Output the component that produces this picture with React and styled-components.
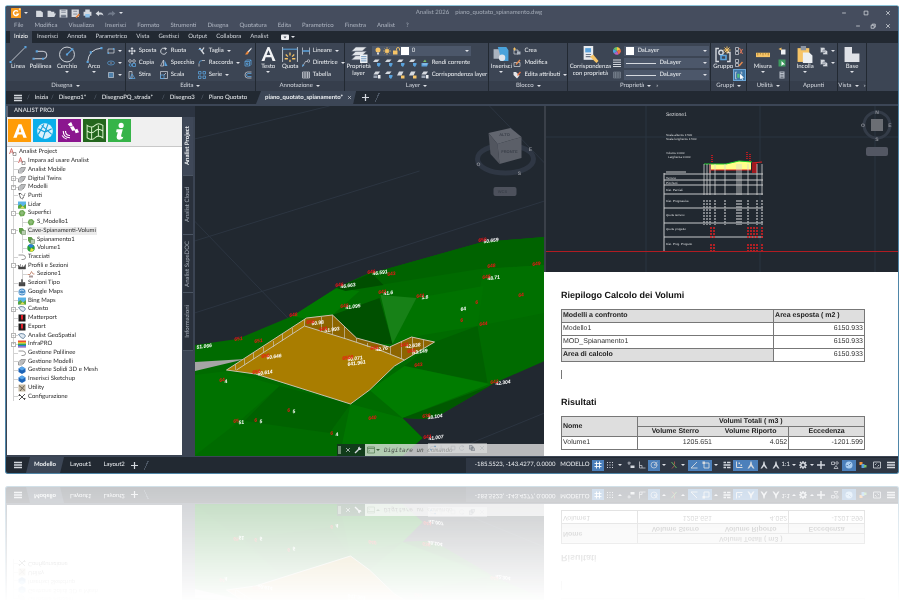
import { useState } from 'react';
import styled, { createGlobalStyle, css } from 'styled-components';

const W = '#d5d9df';
const B = '#5aa2dc';
const Y = '#f6c467';
const line = { fill: 'none', stroke: W, strokeWidth: 1.4 };
const blue = { fill: 'none', stroke: B, strokeWidth: 1.6 };

// all glyphs are drawn on a 16 x 16 grid
const glyphs = {
  logo: (
    <>
      <rect width="16" height="16" rx="1" fill="#f59a1f" />
      <path d="M11 5.5a4 4 0 1 0 .6 4.5H8.5" fill="none" stroke="#fff" strokeWidth="2.2" />
      <circle cx="14" cy="2" r="1.5" fill="#ffe2b0" />
    </>
  ),
  file: <path d="M2 3h8l4 3v8H2z" fill={W} />,
  open: <path d="M1 3h5l2 2h5v3h3l-3 6H1z" fill={W} />,
  save: (
    <>
      <path d="M1 1h14v14H1z" fill={W} />
      <path d="M4 3h8M4 6h8M4 11h8v4H4z" stroke="#6b7484" fill="#6b7484" strokeWidth="1.2" />
    </>
  ),
  saveas: (
    <>
      <path d="M1 1h13v13H1z" fill={W} />
      <path d="M4 4h7M4 9h7" stroke="#6b7484" strokeWidth="1.4" />
      <path d="M8 14l6-6 2 2-6 6z" fill="#e8833a" />
    </>
  ),
  print: (
    <>
      <path d="M4 1h8v4H4zM1 5h14v7H1z" fill={W} />
      <path d="M4 9h8v6H4z" fill="#8ec1ea" />
    </>
  ),
  undo: <path d="M1 8l6-5v3h4q4 1 4 6q-2-3-8-2v3z" fill={W} />,
  redo: <path d="M15 8l-6-5v3H5q-4 1-4 6q2-3 8-2v3z" fill="#707989" />,
  min: <path d="M3 8h10" {...line} strokeWidth="2" />,
  max: <path d="M3 3h10v10H3z" {...line} strokeWidth="2" />,
  restore: <path d="M3 6h8v8H3zM6 6V3h8v8h-3" {...line} strokeWidth="2" />,
  close: <path d="M3 3l10 10M13 3L3 13" {...line} strokeWidth="2" />,
  menu: <path d="M0 3h16M0 8h16M0 13h16" {...line} strokeWidth="2.6" />,
  plus: <path d="M8 0v16M0 8h16" {...line} strokeWidth="2.8" />,
  camera: (
    <>
      <rect y="3" width="16" height="11" rx="2" fill="#eef0f3" />
      <path d="M5 7h6l-3 4z" fill="#49505c" />
    </>
  ),
  line: (
    <>
      <path d="M2 14L14 2" {...line} strokeWidth="0.8" />
      <path d="M0 14h2v2H0zM14 0h2v2h-2z" fill={B} />
    </>
  ),
  polyline: (
    <>
      <path d="M1 12h9a3.5 3.5 0 0 0 0-7H4" {...line} strokeWidth="0.9" />
      <path d="M0 11h2v2H0zM9 11h2v2H9zM3 4h2v2H3z" fill={B} />
    </>
  ),
  circle: (
    <>
      <circle cx="8" cy="8" r="7" {...line} strokeWidth="0.9" />
      <path d="M8 8l5-5" {...blue} strokeWidth="1" />
      <path d="M7 7h2v2H7zM12 2h2v2h-2z" fill={B} />
    </>
  ),
  arc: (
    <>
      <path d="M2 15Q3 3 15 2" {...line} strokeWidth="0.9" />
      <path d="M1 14h2v2H1zM4 5h2v2H4zM14 1h2v2h-2z" fill={B} />
    </>
  ),
  rect: (
    <>
      <path d="M2 4h12v8H2z" {...line} />
      <path d="M1 11h3v3H1zM12 2h3v3h-3z" fill={B} />
    </>
  ),
  ellipse: (
    <>
      <ellipse cx="8" cy="8" rx="7" ry="4" {...line} stroke={B} />
      <path d="M7 7h2v2H7z" fill={W} />
    </>
  ),
  hatch: (
    <>
      <path d="M3 3h10v10H3z" {...line} />
      <path d="M3 6h10M3 10h10M6 3v10M10 3v10" {...blue} />
    </>
  ),
  move: <path d="M8 0l3 4H9v3h3V5l4 3-4 3V9H9v3h2l-3 4-3-4h2V9H4v2L0 8l4-3v2h3V4H5z" fill={W} />,
  copy: (
    <>
      <circle cx="4" cy="4" r="2.7" {...line} />
      <circle cx="12" cy="4" r="2.7" {...line} />
      <circle cx="5" cy="12" r="2.7" {...blue} />
      <path d="M9 9h6v6H9z" {...blue} />
    </>
  ),
  stretch: (
    <>
      <path d="M2 1h6v14H2z" {...line} />
      <path d="M8 6l6 9H4z" {...blue} />
    </>
  ),
  rotate: (
    <>
      <path d="M13 10a6 6 0 1 1-3-7" {...line} strokeWidth="1.8" />
      <path d="M9 0l5 3-4 4z" fill={W} />
    </>
  ),
  mirror: (
    <>
      <path d="M7 2v12H1z" {...line} />
      <path d="M9 2v12h6z" fill={B} />
    </>
  ),
  scale: (
    <>
      <path d="M1 1h14v14H1z" {...line} />
      <path d="M1 8h7v7H1z" {...blue} />
      <path d="M8 8l4-4" {...line} />
    </>
  ),
  trim: (
    <>
      <path d="M3 2l9 12M12 1L7 9" {...line} strokeWidth="2.6" />
      <path d="M1 5h6" {...blue} />
    </>
  ),
  fillet: (
    <>
      <path d="M2 15V9" {...line} />
      <path d="M2 9q0-6 6-6" {...blue} />
      <path d="M8 3h6" {...line} />
    </>
  ),
  array: (
    <>
      <path d="M1 1h5v5H1zM10 1h5v5h-5z" {...blue} />
      <path d="M1 10h5v5H1zM10 10h5v5h-5z" {...blue} />
    </>
  ),
  brush: (
    <>
      <path d="M15 1L7 9l2 2 6-7z" fill="#e7e9ed" />
      <path d="M7 8l3 3-3 4H2z" fill="#f08a3c" />
    </>
  ),
  cube: <path d="M2 5h9v9H2zM2 5l3-3h9v9l-3 3M11 5l3-3M5 8h3v3H5z" {...blue} />,
  offset: (
    <>
      <path d="M15 2H7q-5 0-5 6t5 6h8" {...line} />
      <path d="M15 5H8q-3 0-3 3t3 3h7" {...blue} />
    </>
  ),
  textA: <path d="M7 0h2l6.500 15h-3.200l-1.300-4H5L3.700 15H.5zM6 8.500h4L8 3.500z" fill="#f1f3f5" />,
  dim: (
    <>
      <path d="M1 1v14M15 1v14" {...line} strokeWidth="0.8" />
      <path d="M1 3h14" {...blue} strokeWidth="1" />
      <path d="M8 6v3M4 8l2 2M12 8l-2 2M3 12h3M10 12h3M8 13v2" stroke={Y} strokeWidth="1.200" />
    </>
  ),
  linear: (
    <>
      <path d="M1 1v14M15 1v14" {...line} />
      <path d="M1 8h14" {...blue} strokeWidth="3" />
    </>
  ),
  leader: (
    <>
      <path d="M1 15L7 5h3" {...line} />
      <circle cx="13" cy="4" r="2.500" {...line} />
      <path d="M0 11l5 1-4 4z" fill={B} />
    </>
  ),
  table: <path d="M1 2h14v12H1zM1 6h14M1 10h14M6 2v12M11 2v12" {...line} />,
  layers: (
    <>
      <path d="M5 1h10l-4 4H1zM5 5h10l-4 4H1zM5 9h10l-4 4H1z" fill="#e3e6ea" stroke="#596273" strokeWidth="0.500" />
      <path d="M9 8h7v8H9z" fill="#eef2f6" />
      <path d="M10 10h5M10 12h5M10 14h5" stroke="#4b7fb0" strokeWidth="0.700" />
    </>
  ),
  bulb: (
    <>
      <circle cx="8" cy="6" r="5" fill={Y} />
      <path d="M6 11h4v4H6z" fill={W} />
    </>
  ),
  sun: (
    <>
      <circle cx="8" cy="8" r="4" fill={Y} />
      <path d="M8 0v16M0 8h16M3 3l10 10M13 3L3 13" stroke={Y} strokeWidth="1.200" />
    </>
  ),
  lock: (
    <>
      <path d="M2 7h9v8H2z" fill={Y} />
      <path d="M9 7V4q0-3 3-3t3 3v3" fill="none" stroke={Y} strokeWidth="1.800" />
    </>
  ),
  swatch: <path d="M0 0h16v16H0z" fill="#fff" />,
  layerBlue: (
    <>
      <path d="M4 1h9l-4 5H0z" fill={W} />
      <path d="M8 8h7v3l-3 5-4-3z" fill={B} />
    </>
  ),
  layerYellow: (
    <>
      <path d="M4 1h9l-4 8H0z" fill={W} />
      <path d="M8 9h7v6H8z" fill={Y} />
    </>
  ),
  layerWhite: (
    <>
      <path d="M5 1h9l-4 6H1z" fill={W} />
      <path d="M1 9h8v5H1z" fill="#9ba4b2" />
      <path d="M10 8h5v7h-5z" fill="#eef0f3" />
    </>
  ),
  makeCurrent: (
    <>
      <path d="M1 8h14l-3 7H1z" fill={B} />
      <path d="M4 6l4-5 3 5z" fill="#7ac069" />
      <path d="M3 10h9" stroke="#fff" />
    </>
  ),
  insert: (
    <>
      <path d="M1 3h10v9H1z" fill="#aab3bf" />
      <path d="M5 1h8l2 3v10H7V8z" fill="#4aa3dc" />
      <circle cx="9" cy="11" r="3" fill="#dfe5ec" />
    </>
  ),
  create: (
    <>
      <path d="M2 6h8v8H2z" {...line} />
      <path d="M8 9h7v6H8z" fill="#aab3bf" />
      <path d="M3 1v6M0 4h6" stroke={Y} strokeWidth="2" />
    </>
  ),
  edit: (
    <>
      <path d="M2 7h12v8H2z" {...line} />
      <path d="M5 10l8-9 2 2-8 9z" fill="#e58a4e" />
    </>
  ),
  attr: (
    <>
      <path d="M1 2h5l7 7-5 6-7-7z" fill="#e3e6ea" />
      <path d="M8 8l6-7 2 2-6 7z" fill="#e8754a" />
    </>
  ),
  match: (
    <>
      <path d="M2 0h9v13H2z" fill="#e8ebef" />
      <path d="M3.500 2H9v4H3.500z" fill={B} />
      <path d="M4 8h5M4 10h5" stroke="#6b7484" />
      <path d="M8 10l3-2 5 6-2 2z" fill={Y} />
    </>
  ),
  wheel: (
    <>
      <path d="M8 8V0a8 8 0 0 1 7 5z" fill="#f5c542" />
      <path d="M8 8l7-3a8 8 0 0 1-4 10z" fill="#ef6a43" />
      <path d="M8 8l3 7a8 8 0 0 1-9-2z" fill="#b95fc0" />
      <path d="M8 8l-6 5A8 8 0 0 1 1 4z" fill="#4aa3dc" />
      <path d="M8 8L1 4a8 8 0 0 1 7-4z" fill="#6bc16b" />
    </>
  ),
  weights: <path d="M0 2h16M0 6.500h16M0 11h16M0 15h16" stroke={W} strokeWidth="2" />,
  ltype: <path d="M1 2h14v12H1zM1 6h14M1 10h14M5 2v12M10 2v12" fill="#4c5462" stroke="#8b94a2" />,
  group: (
    <>
      <path d="M4 2H1v13h3M12 6h3v9h-3" {...line} />
      <circle cx="6" cy="6" r="2.200" {...line} />
      <path d="M6 9h5v4H6z" {...blue} />
      <path d="M12 0v7M8.500 3.500h7M9.500 1l5 5M14.500 1l-5 5" stroke={Y} strokeWidth="1" />
    </>
  ),
  ungroup: (
    <>
      <path d="M1 1h6v6H1zM1 9h6v6H1z" {...line} />
      <path d="M9 2l6 12M15 4l-5 9" stroke="#e07a5c" strokeWidth="2" />
    </>
  ),
  groupEdit: (
    <>
      <path d="M1 1h6v6H1zM1 9h6v6H1z" {...line} />
      <path d="M8 14l7-8" stroke="#e58a4e" strokeWidth="3" />
    </>
  ),
  groupPick: (
    <>
      <path d="M3 2H1v12h2M10 2h2v4" {...line} />
      <path d="M4 5h4v7H4z" fill="#52c27c" />
      <path d="M9 5v10l2-2 2 3 1-1-1-3h3z" fill="#fff" />
    </>
  ),
  measure: (
    <>
      <path d="M0 6h16v5H0z" fill={Y} />
      <path d="M2 6v3M5 6v2M8 6v3M11 6v2M14 6v3" stroke="#9a7025" strokeWidth="0.800" />
    </>
  ),
  pick: (
    <>
      <path d="M6 5h9v10H6z" fill="#eef0f3" />
      <path d="M1 4l6-3v6z" fill={Y} />
    </>
  ),
  selectAll: (
    <>
      <path d="M1 1h14v14H1z" fill="#3d9b5f" />
      <path d="M7 4v10l3-3h4z" fill="#fff" />
    </>
  ),
  calc: (
    <>
      <path d="M3 1h10v14H3z" fill="#b9c0ca" />
      <path d="M5 3h6M5 7h6M5 10h6M5 13h6" stroke="#4b5361" strokeWidth="1.300" />
    </>
  ),
  paste: (
    <>
      <path d="M1 2h11v13H1z" fill={Y} />
      <path d="M4 0h5v4H4z" fill="#8c95a3" />
      <path d="M6 6h6l3 3v7H6z" fill="#eceff2" />
    </>
  ),
  copyClip: <path d="M1 1h7l2 2v8H1zM6 6h6l3 3v6H6z" fill={W} stroke="#515a69" />,
  base: <path d="M1 1h7v6h7v8H1z" fill="#dfe2e7" />,
  grid: <path d="M5 1v14M11 1v14M1 5h14M1 11h14" {...line} stroke="#fff" strokeWidth="1.800" />,
  dots: <path d="M2 3h12M2 8h12M2 13h12" {...line} strokeWidth="2" strokeDasharray="2 3" />,
  dyn: (
    <>
      <path d="M4 1v7M1 4h7" {...line} />
      <path d="M7 9h8v5H7z" fill={W} />
    </>
  ),
  ortho: <path d="M3 1v13h12M3 9h5v5" {...line} />,
  polar: (
    <>
      <circle cx="8" cy="8" r="6" {...line} />
      <path d="M8 8l7-6M8 8h7" {...line} />
    </>
  ),
  iso: (
    <>
      <path d="M3 2l10 12" stroke="#6cbf5c" strokeWidth="1.800" />
      <path d="M9 1v6M9 9l-5 6" stroke="#cf6152" strokeWidth="1.400" />
    </>
  ),
  track: <path d="M14 2L2 14h13" {...line} strokeWidth="1.800" />,
  osnap: (
    <>
      <path d="M4 4h10v10H4z" {...line} strokeWidth="1.800" />
      <path d="M1 1h5v5H1z" fill={W} />
    </>
  ),
  lwt: <path d="M1 3h5M8 3h7M1 8h14M1 13h5M8 13h7" {...line} strokeWidth="2.600" />,
  ucs: (
    <>
      <path d="M3 1v12h12" {...line} strokeWidth="2" />
      <path d="M7 3h3v3H7zM11 7h3v3h-3z" fill={W} />
    </>
  ),
  person: <path d="M7 1h2l1 6 5 8h-3L8 10l-4 5H1l5-8z" fill={W} />,
  gear: (
    <>
      <circle cx="8" cy="8" r="4.500" fill="none" stroke={W} strokeWidth="3" />
      <path d="M8 0v3M8 13v3M0 8h3M13 8h3M2 2l2 2M12 12l2 2M14 2l-2 2M4 12l-2 2" {...line} strokeWidth="2.500" />
    </>
  ),
  shapes: (
    <>
      <path d="M1 2h6v5H1zM6 15l4-6 4 6z" {...line} />
      <circle cx="12" cy="4" r="2.500" {...line} />
    </>
  ),
  perf: (
    <>
      <circle cx="8" cy="8" r="7" fill="#a9cdf0" />
      <path d="M8 8l4-4M3 9h3" stroke="#3f6ea8" strokeWidth="1.500" />
    </>
  ),
  cloud: (
    <>
      <path d="M1 2h6v6H1z" fill="#f0913c" />
      <path d="M5 6h6v8H5z" fill={B} />
      <path d="M10 8h5v5h-5z" fill="#7ac069" />
    </>
  ),
  full: <path d="M1 2h14v12H1zM4 8l3-3M12 8l-3 3" {...line} strokeWidth="1.600" />,
  wrench: <path d="M1 13l7-7q-1-4 3-5l1 3 3 1q-1 4-5 3l-7 7z" fill={W} />,
  command: <path d="M1 2h14v12H1zM1 5h14M3 8l2 1.500L3 11" fill="none" stroke="#51784f" strokeWidth="1.400" />,
  // project tree
  letterA: (
    <>
      <path d="M1 12L5 1l4 11M3 8h4" fill="none" stroke="#c6504c" strokeWidth="1.600" />
      <path d="M8 9h6v6H8z" fill="none" stroke="#666" strokeWidth="1.200" />
    </>
  ),
  sheet: <path d="M1 8l5-5h9l-3 7-5 4H1zM4 6h9M3 10h9" fill="#dfe1e4" stroke="#666" strokeWidth="1.200" />,
  points: <path d="M2 3h3M2 3l3 9 4 2 5-11M5 3l4 3" fill="none" stroke="#333" strokeWidth="1.800" strokeDasharray="3 1" />,
  photo: (
    <>
      <path d="M0 1h16v14H0z" fill="#5ab4e6" />
      <path d="M0 10l5-4 5 5 6-5v9H0z" fill="#5aa83c" />
      <path d="M4 15l5-5 5 5z" fill="#e8df5a" />
    </>
  ),
  surface: (
    <>
      <path d="M1 9l3-6 6-1 5 5-3 7-7 1z" fill="#6aa84f" />
      <path d="M4 8h8M8 4v9" stroke="#a8c79a" strokeWidth="1.500" />
    </>
  ),
  cave: (
    <>
      <path d="M2 2h7l3 4v8H5L2 9z" fill="#5f9e48" />
      <path d="M7 7h8v8H7z" fill="#b8cdb0" stroke="#537c47" />
    </>
  ),
  volume: (
    <>
      <circle cx="8" cy="8" r="7.500" fill="#2aa038" />
      <path d="M8 8L2 3a7.500 7.500 0 0 1 12 1z" fill="#2b7fd8" />
      <path d="M8 8l-2 7h5l3-4z" fill="#f1e13b" />
    </>
  ),
  path: <path d="M1 4h9q5 1 5 5t-5 4H7" fill="none" stroke="#777" strokeWidth="1.500" />,
  profile: <path d="M1 14V6l3 4h8l3-5v9zM5 4v5M9 6v4" fill="#444" stroke="#444" />,
  section: (
    <>
      <path d="M1 9h5l3-6 3 5h3" fill="none" stroke="#b8745a" strokeWidth="1.500" />
      <path d="M4 11h8v4H4z" fill="#a99" />
    </>
  ),
  types: <path d="M7 1h2v6h5v7H2V7h5zM4 9v3M8 9v3M12 9v3" fill="#555" stroke="#222" strokeWidth="0.800" />,
  globe: (
    <>
      <circle cx="8" cy="8" r="7" fill="#4a8fc9" />
      <path d="M3 6q5-4 9 0M2 10q6 4 12 0" stroke="#cfe4f5" strokeWidth="1.800" fill="none" />
    </>
  ),
  land: <path d="M1 5l5-2 6 1 3 4-4 5-4-1z" fill="#dfe9f2" stroke="#4c6e8e" strokeWidth="1.500" />,
  matter: (
    <>
      <path d="M1 1h14v14H1z" fill="#1b1b1b" />
      <path d="M6 2h4v7l-2 5-2-5z" fill="#e3202b" />
    </>
  ),
  rainbow: (
    <>
      <path d="M0 1h16v3H0z" fill="#e94b35" />
      <path d="M0 4h16v3H0z" fill="#f4b41e" />
      <path d="M0 7h16v3H0z" fill="#35ab4a" />
      <path d="M0 10h16v3H0z" fill="#2a79d0" />
      <path d="M0 13h16v2H0z" fill="#7a3fb0" />
    </>
  ),
  solid: (
    <>
      <path d="M8 1l7 4v7l-7 4-7-4V5z" fill="#1c63b7" />
      <path d="M8 1l7 4-7 4-7-4z" fill="#57a5ea" />
    </>
  ),
  tools: <path d="M2 2l12 12M14 2L2 14M1 5h5M10 11h5" fill="none" stroke="#555" strokeWidth="2" />,
  utility: (
    <>
      <path d="M1 1h14v14H1z" fill="#c8bba3" />
      <path d="M2 3l12 10M13 3L4 14" stroke="#6a6257" strokeWidth="2" />
    </>
  ),
  // coloured palette buttons
  bigA: <path d="M6.700 2h2.600l4.700 12h-3l-1-2.800H6L5 14H2zM6.800 9h2.400L8 5z" fill="#fff" />,
  net: (
    <>
      <circle cx="8" cy="8" r="7" fill="#d9f1fb" />
      <path d="M2 6l6 3 6-3M8 9l-2 6M8 9l3-8M2 11l5-9M14 11L5 3" fill="none" stroke="#12a0dc" strokeWidth="1" />
    </>
  ),
  satellite: (
    <>
      <path d="M6 2l3-2 1.500 3-2.500 1zM12 7l2.500-1 1.500 3-3 1z" fill="#fff" />
      <path d="M8 4.500l3-1 2 3.500-3 1z" fill="#fff" />
      <path d="M4 8q0 4 4 4M2 8q0 6 6 6M1 12q2 3 4 3" fill="none" stroke="#fff" strokeWidth="1" />
    </>
  ),
  mesh: <path d="M1 3q4 3 7 0t7 0v11q-4-3-7 0t-7 0zM5 4v11M11 3v10M1 8q4 3 7 0t7 0" fill="none" stroke="#d5f0c8" strokeWidth="0.900" />,
  info: (
    <>
      <circle cx="9" cy="3" r="2.300" fill="#fff" />
      <path d="M5 6.500h5.500L9 12q0 2 2 1l-1 2q-5 2-5-2l1-4H4.500z" fill="#fff" />
    </>
  ),
};

const Icon = ({ name, size = 8 }) => (
  <Svg viewBox="0 0 16 16" width={size} height={size} aria-hidden="true">
    {glyphs[name]}
  </Svg>
);

const menus = ['File', 'Modifica', 'Visualizza', 'Inserisci', 'Formato', 'Strumenti', 'Disegna', 'Quotatura', 'Edita', 'Parametrico', 'Finestra', 'Analist', '?'];
const ribbonTabs = ['Inizio', 'Inserisci', 'Annota', 'Parametrico', 'Vista', 'Gestisci', 'Output', 'Collabora', 'Analist'];
const quick = ['file', 'open', 'save', 'saveas', 'print', 'undo', 'redo'];

const drawings = [
  { label: 'Inizia', width: 24 },
  { label: 'Disegno1*', width: 43 },
  { label: 'DisegnoPQ_strada*', width: 68 },
  { label: 'Disegno3', width: 39 },
  { label: 'Piano Quotato', width: 51 },
];

const tree = [
  [0, 'letterA', 'Analist Project'],
  [1, 'letterA', 'Impara ad usare Analist'],
  [1, 'sheet', 'Analist Mobile'],
  [1, 'sheet', 'Digital Twins', '+'],
  [1, 'sheet', 'Modelli', '+'],
  [1, 'points', 'Punti'],
  [1, 'photo', 'Lidar'],
  [1, 'surface', 'Superfici', '-'],
  [2, 'surface', 'S_Modello1'],
  [1, 'cave', 'Cave-Spianamenti-Volumi', '-'],
  [2, 'cave', 'Spianamento1'],
  [2, 'volume', 'Volume1'],
  [1, 'path', 'Tracciati'],
  [1, 'profile', 'Profili e Sezioni', '-'],
  [2, 'section', 'Sezione1'],
  [1, 'types', 'Sezioni Tipo'],
  [1, 'globe', 'Google Maps'],
  [1, 'photo', 'Bing Maps'],
  [1, 'land', 'Catasto', '+'],
  [1, 'matter', 'Matterport'],
  [1, 'matter', 'Export'],
  [1, 'land', 'Analist GeoSpatial', '+'],
  [1, 'rainbow', 'InfraPRO', '+'],
  [1, 'path', 'Gestione Polilinee'],
  [1, 'sheet', 'Gestione Modelli'],
  [1, 'solid', 'Gestione Solidi 3D e Mesh'],
  [1, 'solid', 'Inserisci Sketchup'],
  [1, 'utility', 'Utility'],
  [1, 'tools', 'Configurazione'],
];

const paletteButtons = [
  ['bigA', '#ff9c07', 'Analist'],
  ['net', '#0aaeea', 'Rete'],
  ['satellite', '#8b168f', 'Satellite'],
  ['mesh', '#23661d', 'Superfici'],
  ['info', '#36b449', 'Informazioni'],
];

const sideTabs = [
  ['Analist Project', 59],
  ['Analist Cloud', 59],
  ['Analist SupeDOC', 58],
  ['Informazioni', 58],
];

// name, width, active, caret after it
const statusTools = [
  ['grid', 12, true],
  ['dots', 12, false, true],
  ['dyn', 12],
  ['ortho', 11],
  ['polar', 12, true, true],
  ['iso', 10, false, true],
  ['track', 12, true],
  ['osnap', 12, true, true],
  ['lwt', 12],
  ['ucs', 12, true],
  ['person', 13, true],
  ['person', 12],
  ['person', 12],
];

// x, y, red tag, white elevation
const spots = [
  [197, 346, '', '51.066'],
  [235, 340, '651', ''],
  [255, 342, '651', ''],
  [290, 316, '648', ''],
  [336, 286, '646', '46.663'],
  [341, 307, '640', '41.095'],
  [368, 273, '646', '46.591'],
  [388, 275, '643', ''],
  [379, 293, '641', '41.6'],
  [417, 297, '641', '1.6'],
  [479, 241, '650', '50.659'],
  [488, 267, '648', ''],
  [483, 278, '648', '48.71'],
  [533, 265, '649', ''],
  [461, 308, '', '64'],
  [476, 303, '6', ''],
  [519, 296, '64', ''],
  [461, 321, '6', ''],
  [480, 325, '644', ''],
  [401, 346, '642', '42.638'],
  [408, 352, '643', '43.149'],
  [415, 366, '643', ''],
  [491, 383, '642', '42.304'],
  [423, 417, '638', '38.104'],
  [424, 438, '641', '41.007'],
  [369, 419, '640', ''],
  [307, 323, '650', '50.98'],
  [320, 330, '641', '41.993'],
  [262, 357, '650', '50.646'],
  [253, 373, '650', '50.614'],
  [343, 359, '6500', '50.071'],
  [348, 363, '', '641.961'],
  [371, 349, '642', '42.76'],
  [220, 381, '64', '4'],
  [234, 422, '65', '51'],
  [255, 421, '6', '5'],
  [288, 411, '6', '5'],
  [331, 434, '6', '4'],
];

const Big = ({ icon, size = 18, width, caret = true, children }) => (
  <BigButton type="button" $width={width}>
    <Icon name={icon} size={size} />
    <span>{children}</span>
    {caret && <Caret />}
  </BigButton>
);

const Tool = ({ icon, caret, pressed, children }) => (
  <ToolButton type="button" aria-label={children ? undefined : icon} $pressed={pressed}>
    <Icon name={icon} size={pressed ? 9 : 8} />
    {children && <span>{children}</span>}
    {caret && <Caret />}
  </ToolButton>
);

const Panel = ({ title, size, arrow = true, launcher, children }) => (
  <PanelBox $size={size}>
    <PanelBody>{children}</PanelBody>
    <PanelTitle>
      <span>{title}</span>
      {arrow && <Caret />}
      {launcher && <Launcher>»</Launcher>}
    </PanelTitle>
  </PanelBox>
);

function Ribbon() {
  return (
    <RibbonRow>
      <Panel title="Disegna" size={119}>
        <Big icon="line" width={22} caret={false}>Linea</Big>
        <Big icon="polyline" width={23} caret={false}>Polilinea</Big>
        <Big icon="circle" width={30}>Cerchio</Big>
        <Big icon="arc" width={24}>Arco</Big>
        <ToolColumn>
          <Tool icon="rect" caret />
          <Tool icon="ellipse" caret />
          <Tool icon="hatch" caret />
        </ToolColumn>
      </Panel>
      <Panel title="Edita" size={129}>
        <ToolColumn $width={32}>
          <Tool icon="move">Sposta</Tool>
          <Tool icon="copy">Copia</Tool>
          <Tool icon="stretch">Stira</Tool>
        </ToolColumn>
        <ToolColumn $width={38}>
          <Tool icon="rotate">Ruota</Tool>
          <Tool icon="mirror">Specchio</Tool>
          <Tool icon="scale">Scala</Tool>
        </ToolColumn>
        <ToolColumn $width={46}>
          <Tool icon="trim" caret>Taglia</Tool>
          <Tool icon="fillet" caret>Raccorda</Tool>
          <Tool icon="array" caret>Serie</Tool>
        </ToolColumn>
        <ToolColumn>
          <Tool icon="brush" />
          <Tool icon="cube" />
          <Tool icon="offset" />
        </ToolColumn>
      </Panel>
      <Panel title="Annotazione" size={88}>
        <Big icon="textA" size={15} width={23}>Testo</Big>
        <Big icon="dim" width={21} caret={false}>Quota</Big>
        <ToolColumn>
          <Tool icon="linear" caret>Lineare</Tool>
          <Tool icon="leader" caret>Direttrice</Tool>
          <Tool icon="table">Tabella</Tool>
        </ToolColumn>
      </Panel>
      <Panel title="Layer" size={144}>
        <Big icon="layers" width={26} caret={false}>Proprietà layer</Big>
        <LayerColumn>
          <Field $width={99}>
            <Icon name="bulb" />
            <Icon name="sun" />
            <Icon name="lock" />
            <Icon name="swatch" />
            <Select aria-label="Layer corrente" defaultValue="0">
              <option>0</option>
            </Select>
            <Caret />
          </Field>
          <LayerTools>
            {['layerBlue', 'layerBlue', 'layerBlue', 'layerBlue'].map((n, i) => (
              <Tool key={i} icon={n} />
            ))}
            <Tool icon="makeCurrent">Rendi corrente</Tool>
          </LayerTools>
          <LayerTools>
            {['layerWhite', 'layerBlue', 'layerYellow', 'layerYellow'].map((n, i) => (
              <Tool key={i} icon={n} />
            ))}
            <Tool icon="layerWhite">Corrispondenza layer</Tool>
          </LayerTools>
        </LayerColumn>
      </Panel>
      <Panel title="Blocco" size={78}>
        <Big icon="insert" width={22}>Inserisci</Big>
        <ToolColumn>
          <Tool icon="create">Crea</Tool>
          <Tool icon="edit">Modifica</Tool>
          <Tool icon="attr" caret>Edita attributi</Tool>
        </ToolColumn>
      </Panel>
      <Panel title="Proprietà" size={142} launcher>
        <Big icon="match" width={42} caret={false}>Corrispondenza con proprietà</Big>
        <FieldColumn>
          <FieldRow>
            <Icon name="wheel" />
            <Field>
              <Icon name="swatch" />
              <Select aria-label="Colore" defaultValue="DaLayer">
                <option>DaLayer</option>
              </Select>
              <Caret />
            </Field>
          </FieldRow>
          {['weights', 'ltype'].map((n) => (
            <FieldRow key={n}>
              <Icon name={n} />
              <Field>
                <Stroke />
                <Select aria-label={n === 'weights' ? 'Spessore linea' : 'Tipo di linea'} defaultValue="DaLayer">
                  <option>DaLayer</option>
                </Select>
                <Caret />
              </Field>
            </FieldRow>
          ))}
        </FieldColumn>
      </Panel>
      <Panel title="Gruppi" size={35}>
        <Big icon="group" size={16} width={22} caret={false}>Gruppo</Big>
        <ToolColumn>
          <Tool icon="ungroup" />
          <Tool icon="groupEdit" />
          <Tool icon="groupPick" pressed />
        </ToolColumn>
      </Panel>
      <Panel title="Utilità" size={42}>
        <Big icon="measure" size={14} width={29}>Misura</Big>
        <ToolColumn>
          <Tool icon="pick" />
          <Tool icon="selectAll" />
          <Tool icon="calc" />
        </ToolColumn>
      </Panel>
      <Panel title="Appunti" size={47} arrow={false}>
        <Big icon="paste" width={28}>Incolla</Big>
        <ToolColumn>
          <Tool icon="copyClip" caret />
          <Tool icon="copyClip" caret />
        </ToolColumn>
      </Panel>
      <Panel title="Vista" size={28} launcher>
        <Big icon="base" width={26}>Base</Big>
      </Panel>
      <PanelBox $size={31} />
    </RibbonRow>
  );
}

function Terrain() {
  return (
    <Canvas viewBox="195 105 350 350" preserveAspectRatio="xMidYMid slice">
      <path d="M195 220L320 350M195 312L545 200M195 240L420 170M195 138L330 105M440 455L545 412M490 105L545 162" stroke="#2c3541" strokeWidth="1" fill="none" />
      <path d="M195 344L238 338L293 315L337 287L370 272L387 268L483 241L545 236V360L495 382L442 413L427 418L403 417L423 437L403 455H195z" fill="#006b00" />
      <path d="M293 315L337 287L360 290L333 314L307 318z" fill="#007a00" />
      <path d="M337 287L370 272L387 268L483 241L545 236V264L480 268L380 284z" fill="#006300" />
      <path d="M337 287L346 290L384 284L372 272z" fill="#004e00" />
      <path d="M333 314L380 297L393 343L370 343L357 337z" fill="#005000" />
      <path d="M484 268L545 264V312L478 325L480 290z" fill="#007000" />
      <path d="M417 297L484 285L478 325L412 336L393 343z" fill="#007300" />
      <path d="M435 341L478 325L488 382L405 365z" fill="#006000" />
      <path d="M405 365L490 383L403 417L370 389z" fill="#007c00" />
      <path d="M403 417L490 385L442 413L427 418z" fill="#005800" />
      <path d="M195 374L228 370L280 385L240 420L195 455z" fill="#007200" />
      <path d="M280 385L351 403L330 432L245 420z" fill="#006200" />
      <path d="M351 403L403 417L423 437L403 455H340z" fill="#007600" />
      <path d="M381 294L417 297L393 343z" fill="#178117" />
      <path d="M195 361L246 358L195 370z" fill="#a5a5a5" />
      <path d="M227 369L307 317L333 314L357 337L380 346L390 346L412 336L435 341L405 359L395 365L370 389L351 403L256 373z" fill="#a97d00" />
      <path d="M305 325L307 317L333 314L357 337L390 346L412 336L435 341L405 359L380 348L347 338z" fill="#8d6500" />
      <g fill="none" stroke="#c9c1ae" strokeWidth="1">
        <path d="M227 369L307 317L333 314L357 337L390 346L412 336L435 341L405 359L395 365L370 389L351 403L256 373z" />
        <path d="M237 369L305 325L347 338L380 349L405 359" />
        <path d="M236 363V369M245 358V364M254 352V358M264 346V352M274 340V346M283 333V340M293 327V333M305 318V325M322 316V331M333 314V334M345 326V338M357 337V341M368 342V346M391 346V353M402 341V358M413 336V354M424 339V347" strokeWidth="0.700" />
      </g>
      {spots.map(([x, y, tag, z]) => (
        <g key={`${x}-${y}`} transform={`rotate(-8 ${x} ${y})`}>
          <Spot x={x + (tag ? 5 : 0)} y={y + 2}>{z}</Spot>
          <Spot x={x} y={y} $tag>{tag}</Spot>
        </g>
      ))}
      <ellipse cx="506" cy="158" rx="28" ry="14" fill="none" stroke="#2f3744" strokeWidth="5" />
      <path d="M489 132L511 127L522 136L498 143z" fill="#62666f" />
      <path d="M489 132L498 143L500 163L491 153z" fill="#52565f" />
      <path d="M498 143L522 136V157L500 163z" fill="#5b5f68" />
      <rect x="494" y="186" width="23" height="9" rx="2" fill="#4d515c" />
      <Compass x="479" y="165">O</Compass>
      <Compass x="520" y="174">S</Compass>
      <Compass x="531" y="150">E</Compass>
      <Compass x="505" y="135" $dim>ALTO</Compass>
      <Compass x="510" y="152" $dim>FRONTE</Compass>
      <Compass x="503" y="192" $dim>WCS</Compass>
    </Canvas>
  );
}

const stations = [705, 708, 711, 716, 726, 738, 740, 742, 749, 758, 763];

function Section() {
  return (
    <Canvas viewBox="547 105 352 166" preserveAspectRatio="xMidYMid slice">
      <path d="M647 105V271M761 105V271M876 105V271M547 136H899" stroke="#2a3440" />
      <Note x="667" y="115" $size={5}>Sezione1</Note>
      <Note x="667" y="135">Scala altezze 1:500</Note>
      <Note x="667" y="139">Scala lunghezze 1:500</Note>
      <Note x="667" y="153">Volume 0.000</Note>
      <Note x="669" y="157">Larghezza 0.000</Note>
      <path d="M712 163L727 163L740 160L752 161V169H712z" fill="#ffff8a" />
      <path d="M705 163L727 163L740 160L753 161" fill="none" stroke="#1fd02c" />
      <path d="M711 163V172M712 169H752M753 162L763 161" stroke="#e02020" fill="none" />
      <path d="M753 162h5v10h-5z" fill="#a01a20" />
      <path d="M665 173H764M665 179H764M665 184H764M665 193H764M665 207H764M665 222H764M665 236H764M665 172V250" stroke="#c8c9cb" fill="none" strokeWidth="1" />
      <path d="M667 171H687" stroke="#c8c9cb" />
      {stations.map((x) => (
        <g key={x}>
          <path d={`M${x} 163V194`} stroke="#d4d4d4" strokeWidth="0.800" />
          <path d={`M${x} 199V224`} stroke="#a9abae" strokeWidth="1.400" strokeDasharray="2 1" />
        </g>
      ))}
      {[712, 715, 749, 752, 755, 758, 763].map((x) => (
        <path key={x} d={`M${x} 226V238M${x} 243V252`} stroke="#d42024" strokeWidth="1.600" strokeDasharray="2 1" />
      ))}
      <path d="M713 154V162M748 151V158M751 153V160" stroke="#b01c22" strokeWidth="2" strokeDasharray="1 1" />
      {[['Terreno', 178], ['Picchetti', 183], ['Dist. Parziali', 190], ['Dist. Progressive', 201], ['Quote terreno', 215], ['Quote progetto', 229], ['Dist. Prog. Progetto', 244]].map(([t, y]) => (
        <Note key={t} x="667" y={y}>{t}</Note>
      ))}
      <rect x="545" y="250" width="356" height="1" fill="#b01c22" />
      <circle cx="878" cy="124" r="13" fill="none" stroke="#343c48" strokeWidth="3" />
      <path d="M872 118h12v12h-12z" fill="#6b6e74" />
      <rect x="867" y="146" width="22" height="9" rx="2" fill="#535763" />
      <Compass x="878" y="113">N</Compass>
      <Compass x="864" y="126">O</Compass>
      <Compass x="891" y="126">E</Compass>
      <Compass x="878" y="140">S</Compass>
    </Canvas>
  );
}

function Report() {
  return (
    <Sheet>
      <h2>Riepilogo Calcolo dei Volumi</h2>
      <DataTable>
        <colgroup>
          <col style={{ width: '70%' }} />
          <col />
        </colgroup>
        <thead>
          <tr>
            <Head>Modelli a confronto</Head>
            <Head>Area esposta ( m2 )</Head>
          </tr>
        </thead>
        <tbody>
          <tr>
            <Cell>Modello1</Cell>
            <Cell $num>6150.933</Cell>
          </tr>
          <tr>
            <Cell>MOD_Spianamento1</Cell>
            <Cell $num>6150.933</Cell>
          </tr>
          <tr>
            <Head>Area di calcolo</Head>
            <Cell $num>6150.933</Cell>
          </tr>
        </tbody>
      </DataTable>
      <TextCursor />
      <h2>Risultati</h2>
      <DataTable $compact>
        <colgroup>
          <col style={{ width: '25%' }} />
          <col style={{ width: '25%' }} />
          <col style={{ width: '25%' }} />
          <col />
        </colgroup>
        <thead>
          <tr>
            <Head rowSpan="2">Nome</Head>
            <Head colSpan="3" $center>Volumi Totali ( m3 )</Head>
          </tr>
          <tr>
            <Head $center $open="right">Volume Sterro</Head>
            <Head $center $open="left">Volume Riporto</Head>
            <Head $center>Eccedenza</Head>
          </tr>
        </thead>
        <tbody>
          <tr>
            <Cell>Volume1</Cell>
            <Cell $num $open="right">1205.651</Cell>
            <Cell $num $open="left">4.052</Cell>
            <Cell $num>-1201.599</Cell>
          </tr>
        </tbody>
      </DataTable>
    </Sheet>
  );
}

export default function App() {
  const [tab, setTab] = useState('Inizio');
  const [side, setSide] = useState('Analist Project');
  const [command, setCommand] = useState('');

  return (
    <>
      <GlobalStyle />
      <Page>
        <Window>
          <TitleBar>
            <TitleRow>
              <Quick>
                <IconButton type="button" aria-label="Applicazione"><Icon name="logo" size={10} /></IconButton>
                <Caret />
                {quick.map((n) => (
                  <IconButton key={n} type="button" aria-label={n}><Icon name={n} size={9} /></IconButton>
                ))}
                <Caret />
              </Quick>
              <Title>
                <span>Analist 2026</span>
                <span>piano_quotato_spianamento.dwg</span>
              </Title>
              <WindowButtons $gap={16}>
                <IconButton type="button" aria-label="Riduci"><Icon name="min" size={6} /></IconButton>
                <IconButton type="button" aria-label="Ingrandisci"><Icon name="max" size={6} /></IconButton>
                <IconButton type="button" aria-label="Chiudi"><Icon name="close" size={6} /></IconButton>
              </WindowButtons>
            </TitleRow>
            <MenuRow>
              {menus.map((m) => (
                <MenuButton key={m} type="button">{m}</MenuButton>
              ))}
              <WindowButtons $gap={9}>
                <IconButton type="button" aria-label="Riduci disegno"><Icon name="min" size={6} /></IconButton>
                <IconButton type="button" aria-label="Ripristina disegno"><Icon name="restore" size={6} /></IconButton>
                <IconButton type="button" aria-label="Chiudi disegno"><Icon name="close" size={6} /></IconButton>
              </WindowButtons>
            </MenuRow>
          </TitleBar>

          <RibbonTabs>
            {ribbonTabs.map((t) => (
              <RibbonTab key={t} type="button" $active={t === tab} onClick={() => setTab(t)}>
                {t}
              </RibbonTab>
            ))}
            <CameraButton type="button" aria-label="Barra multifunzione">
              <Icon name="camera" size={8} />
              <Caret />
            </CameraButton>
          </RibbonTabs>
          <Ribbon />

          <FileTabs>
            <IconButton type="button" aria-label="Menu disegni"><Icon name="menu" /></IconButton>
            <FileList>
              {drawings.map((d) => (
                <FileTab key={d.label} type="button" $width={d.width}>
                  {d.label}
                </FileTab>
              ))}
            </FileList>
            <ActiveFile type="button">
              <span>piano_quotato_spianamento*</span>
              <Icon name="close" size={5} />
            </ActiveFile>
            <IconButton type="button" aria-label="Nuovo disegno"><Icon name="plus" size={7} /></IconButton>
            <Slash />
          </FileTabs>

          <Workspace>
            <Palette>
              <PaletteTitle>ANALIST PROJ</PaletteTitle>
              <PaletteMain>
                <PaletteContent>
                  <PaletteTools>
                    {paletteButtons.map(([n, color, label]) => (
                      <PaletteButton key={n} type="button" aria-label={label} $color={color}>
                        <Icon name={n} size={18} />
                      </PaletteButton>
                    ))}
                  </PaletteTools>
                  <Tree>
                    {tree.map(([level, icon, label, toggle]) => (
                      <TreeRow key={label} $level={level}>
                        {level === 2 && <Guide $through />}
                        {level > 0 && (
                          <Guide>{toggle && <Toggle type="button" aria-label={`Espandi ${label}`}>{toggle}</Toggle>}</Guide>
                        )}
                        <Icon name={icon} size={8} />
                        <TreeLabel $selected={label.startsWith('Cave')}>{label}</TreeLabel>
                      </TreeRow>
                    ))}
                  </Tree>
                </PaletteContent>
                <SideTabs>
                  {sideTabs.map(([t, h]) => (
                    <SideTab key={t} type="button" $height={h} $active={t === side} onClick={() => setSide(t)}>
                      {t}
                    </SideTab>
                  ))}
                </SideTabs>
              </PaletteMain>
            </Palette>

            <Model>
              <Terrain />
              <CommandLine>
                <CommandHandle>
                  <Grip />
                  <Icon name="close" size={6} />
                  <Icon name="wrench" size={8} />
                </CommandHandle>
                <CommandField>
                  <Icon name="command" size={8} />
                  <Caret $dark />
                  <input
                    aria-label="Riga di comando"
                    placeholder="Digitare un comando"
                    value={command}
                    onChange={(e) => setCommand(e.target.value)}
                  />
                </CommandField>
              </CommandLine>
              <MiniBar>
                {['rect', 'ortho', 'max', 'rotate', 'copyClip', 'close'].map((n) => (
                  <IconButton key={n} type="button" aria-label={`Vista ${n}`}><Icon name={n} size={6} /></IconButton>
                ))}
              </MiniBar>
            </Model>

            <RightPane>
              <SectionView>
                <Section />
              </SectionView>
              <Report />
            </RightPane>
          </Workspace>

          <StatusBar>
            <IconButton type="button" aria-label="Menu layout"><Icon name="menu" /></IconButton>
            <LayoutTab type="button" $active>Modello</LayoutTab>
            <LayoutTab type="button">Layout1</LayoutTab>
            <LayoutTab type="button">Layout2</LayoutTab>
            <IconButton type="button" aria-label="Nuovo layout"><Icon name="plus" size={7} /></IconButton>
            <Slash />
            <StatusTools>
              <Coords>-185.5523, -143.4277, 0.0000</Coords>
              <StatusText type="button">MODELLO</StatusText>
              {statusTools.map(([n, width, active, caret], i) => (
                <StatusItem key={i}>
                  <StatusButton type="button" aria-label={n} $width={width} $active={active}><Icon name={n} /></StatusButton>
                  {caret && <CaretCell><Caret /></CaretCell>}
                </StatusItem>
              ))}
              <StatusText type="button">1:1</StatusText>
              <Caret />
              <StatusButton type="button" aria-label="Impostazioni" $width={14}><Icon name="gear" /></StatusButton>
              <Caret />
              {['plus', 'shapes', 'perf', 'cloud', 'full', 'menu'].map((n) => (
                <StatusButton key={n} type="button" aria-label={n} $width={14} $active={n === 'perf'}>
                  <Icon name={n} />
                </StatusButton>
              ))}
            </StatusTools>
          </StatusBar>
        </Window>
      </Page>
    </>
  );
}

const GlobalStyle = createGlobalStyle`
  * {
    box-sizing: border-box;
  }
  html {
    overflow: hidden;
  }
  body {
    margin: 0;
    background: #fff;
    font-family: Lato, 'Open Sans', sans-serif;
    font-size: 6px;
    line-height: 8px;
    text-rendering: geometricPrecision;
  }
  button,
  input,
  select {
    margin: 0;
    padding: 0;
    border: 0;
    background: none;
    color: inherit;
    font: inherit;
    text-rendering: inherit;
  }
`;

const Svg = styled.svg`
  display: block;
  flex: none;
`;

const Page = styled.main`
  min-height: 100vh;
  padding: 5px;
`;

const Window = styled.div`
  display: flex;
  flex-direction: column;
  border: 1px solid #4f86a8;
  border-top-color: #8cc3d8;
  border-radius: 3px;
  background: #222932;
  color: #eceff2;
  overflow: hidden;
  -webkit-box-reflect: below 12px linear-gradient(transparent 75%, rgba(0, 0, 0, 0.26));
`;

const Caret = styled.i`
  flex: none;
  width: 0;
  height: 0;
  border: 2px solid transparent;
  border-top-color: ${({ $dark }) => ($dark ? '#3d5f3c' : '#dfe2e7')};
  border-bottom: 0;
`;

const IconButton = styled.button`
  display: flex;
  align-items: center;
  justify-content: center;
`;

const TitleBar = styled.header`
  background: #454d5e;
`;

const TitleRow = styled.div`
  display: grid;
  grid-template-columns: 1fr auto 1fr;
  align-items: center;
  height: 14px;
`;

const Quick = styled.div`
  display: flex;
  align-items: center;
  gap: 3px;
  padding-left: 5px;

  & > i:nth-child(2) {
    margin-right: 4px;
  }
`;

const Title = styled.div`
  display: flex;
  gap: 6px;
  padding-left: 54px;
  color: #a3abb7;
`;

const WindowButtons = styled.div`
  display: flex;
  gap: ${({ $gap }) => $gap}px;
  margin-left: auto;
  padding-right: 7px;
`;

const MenuRow = styled.nav`
  display: flex;
  align-items: center;
  gap: 11px;
  height: 11px;
  padding-left: 8px;
`;

const MenuButton = styled.button`
  color: #aeb5c1;
`;

const RibbonTabs = styled.div`
  display: flex;
  gap: 1px;
  padding-left: 4px;
  height: 12px;
`;

const RibbonTab = styled.button`
  padding: 0 4px;
  color: #d0d4db;

  ${({ $active }) =>
    $active &&
    css`
      background: #3c4554;
      color: #fff;
    `}
`;

const CameraButton = styled.button`
  display: flex;
  align-items: center;
  gap: 2px;
  margin-left: 8px;
`;

const RibbonRow = styled.div`
  display: flex;
  gap: 1px;
  height: 48px;
`;

const PanelBox = styled.section`
  display: flex;
  flex-direction: column;
  flex: ${({ $size }) => $size} 1 0;
  min-width: 0;
  background: #3c4554;
`;

const PanelBody = styled.div`
  display: flex;
  flex: 1;
  padding: 3px 1px 0;
  min-height: 0;
`;

const PanelTitle = styled.div`
  display: flex;
  align-items: center;
  justify-content: center;
  gap: 3px;
  height: 10px;
  background: #363e4c;
  color: #d3d7de;
`;

const Launcher = styled.span`
  margin-left: 2px;
  font-size: 5px;
`;

const BigButton = styled.button`
  display: flex;
  flex: none;
  flex-direction: column;
  align-items: center;
  width: ${({ $width }) => $width}px;

  & > span {
    line-height: 7px;
  }

  & > svg {
    height: 17px;
  }

  & > i {
    margin-top: 1px;
  }
`;

const ToolColumn = styled.div`
  display: flex;
  flex: none;
  flex-direction: column;
  gap: 2px;
  width: ${({ $width }) => ($width ? `${$width}px` : 'auto')};
`;

const ToolButton = styled.button`
  display: flex;
  align-items: center;
  gap: 3px;
  height: 10px;
  padding: 0 1px;
  white-space: nowrap;

  ${({ $pressed }) =>
    $pressed &&
    css`
      outline: 1px solid #6ba6d8;
      background: #3f78a8;
    `}
`;

const LayerColumn = styled.div`
  display: flex;
  flex-direction: column;
  gap: 2px;
  min-width: 0;
`;

const LayerTools = styled.div`
  display: flex;
  gap: 2px;
`;

const Field = styled.div`
  display: flex;
  align-items: center;
  gap: 1px;
  flex: ${({ $width }) => ($width ? 'none' : '1')};
  width: ${({ $width }) => ($width ? `${$width}px` : 'auto')};
  min-width: 0;
  height: 10px;
  padding: 0 2px;
  background: #4c576a;
`;

const Select = styled.select`
  flex: 1;
  min-width: 0;
  appearance: none;
  padding-left: 2px;
`;

const Stroke = styled.i`
  width: 30px;
  height: 1px;
  background: #d5d9df;
`;

const FieldColumn = styled.div`
  display: flex;
  flex: 1;
  flex-direction: column;
  gap: 2px;
  min-width: 0;
  padding-left: 2px;
`;

const FieldRow = styled.div`
  display: flex;
  align-items: center;
  gap: 3px;
`;

const FileTabs = styled.div`
  display: flex;
  align-items: center;
  height: 15px;
  padding-left: 8px;
  border-bottom: 2px solid #3c4656;
`;

const Slash = styled.i`
  width: 8px;
  height: 9px;
  margin-left: 4px;
  background: linear-gradient(114deg, transparent 46%, #4b5563 46% 56%, transparent 56%);
`;

const FileList = styled.div`
  display: flex;
  margin-left: 5px;
`;

const FileTab = styled.button`
  display: flex;
  align-items: center;
  gap: 5px;
  width: ${({ $width }) => $width}px;
  height: 10px;
  white-space: nowrap;

  &::before {
    content: '/';
    color: #66707f;
  }
`;

const ActiveFile = styled.button`
  display: flex;
  align-items: center;
  gap: 4px;
  height: 13px;
  margin: 0 6px 0 4px;
  padding: 0 4px 0 9px;
  background: #3c4656;
  clip-path: polygon(5px 0, 100% 0, calc(100% - 3px) 100%, 0 100%);
  font-weight: 700;
`;

const Workspace = styled.div`
  display: flex;
  min-height: 350px;
`;

const Palette = styled.aside`
  display: flex;
  flex: none;
  flex-direction: column;
  width: 189px;
  background: #3b4453;
`;

const PaletteTitle = styled.h1`
  margin: 0;
  padding: 0 6px;
  height: 11px;
  border-left: 2px solid #5c6677;
  background: #2c3441;
  font-size: 6px;
  font-weight: 400;
  line-height: 10px;
`;

const PaletteMain = styled.div`
  display: flex;
  flex: 1;
  padding: 0 2px 1px 1px;
`;

const PaletteContent = styled.div`
  flex: 1;
  background: #fff;
  color: #2c2c2c;
`;

const PaletteTools = styled.div`
  display: flex;
  gap: 2px;
  padding: 2px 1px 4px;
  background: #f0f0f0;
  border-bottom: 1px solid #c8c8c8;
`;

const PaletteButton = styled.button`
  display: flex;
  align-items: center;
  justify-content: center;
  width: 23px;
  height: 23px;
  background: ${({ $color }) => $color};
`;

const Tree = styled.ul`
  display: grid;
  grid-auto-rows: 1fr;
  height: 253px;
  margin: 1px 0 0;
  padding: 0;
  list-style: none;
`;

const TreeRow = styled.li`
  display: flex;
  align-items: center;
  padding-left: ${({ $level }) => ($level ? 6 : 2)}px;
`;

const Guide = styled.span`
  position: relative;
  align-self: stretch;
  flex: none;
  width: ${({ $through }) => ($through ? 9 : 5)}px;
  border-left: 1px solid #d2d2d2;
  background: ${({ $through }) => ($through ? 'none' : 'linear-gradient(#d2d2d2, #d2d2d2) 0 50% / 100% 1px no-repeat')};
`;

const Toggle = styled.button`
  position: absolute;
  top: 2px;
  left: -3px;
  width: 5px;
  height: 5px;
  border: 1px solid #b5b5b5;
  background: #fff;
  color: #555;
  font-size: 4px;
  line-height: 2px;
`;

const TreeLabel = styled.span`
  margin-left: 1px;
  padding: 0 1px;
  background: ${({ $selected }) => ($selected ? '#ececec' : 'none')};
`;

const SideTabs = styled.div`
  display: flex;
  flex-direction: column;
  width: 10px;
  margin-left: 1px;
`;

const SideTab = styled.button`
  height: ${({ $height }) => $height}px;
  border-bottom: 1px solid #4b5563;
  background: ${({ $active }) => ($active ? '#3f4858' : '#2a313c')};
  color: ${({ $active }) => ($active ? '#f2f4f6' : '#a9b0bb')};
  font-weight: ${({ $active }) => ($active ? 700 : 400)};
  writing-mode: sideways-lr;
  text-align: center;
  white-space: nowrap;
`;

const Model = styled.div`
  position: relative;
  flex: 349 1 0;
  min-width: 0;
  background: #212830;
`;

const Canvas = styled.svg`
  position: absolute;
  inset: 0;
  width: 100%;
  height: 100%;
`;

const Spot = styled.text`
  fill: ${({ $tag }) => ($tag ? '#f01414' : '#fff')};
  font: italic 700 5px 'Liberation Sans', sans-serif;
`;

const Compass = styled.text`
  fill: ${({ $dim }) => ($dim ? '#3c414b' : '#8d9097')};
  font: 700 ${({ $dim }) => ($dim ? 4 : 5)}px 'Liberation Sans', sans-serif;
  text-anchor: middle;
`;

const Note = styled.text`
  fill: #dcdee0;
  font: ${({ $size = 3 }) => $size}px 'Liberation Sans', sans-serif;
`;

const CommandLine = styled.form`
  position: absolute;
  right: 0;
  bottom: 0;
  display: flex;
  width: 207px;
  height: 12px;
`;

const CommandHandle = styled.div`
  display: flex;
  align-items: center;
  justify-content: space-between;
  width: 28px;
  padding: 0 3px 0 1px;
  background: rgba(20, 50, 30, 0.85);
`;

const Grip = styled.i`
  width: 3px;
  height: 8px;
  background: #6f8a72;
`;

const CommandField = styled.label`
  display: flex;
  flex: 1;
  align-items: center;
  gap: 1px;
  padding-left: 2px;
  background: rgba(228, 228, 228, 0.78);

  & > input {
    flex: 1;
    min-width: 0;
    padding-left: 3px;
    font: italic 6px 'DejaVu Sans Mono', monospace;
  }

  & > input::placeholder {
    color: #4b4f4b;
    opacity: 1;
  }
`;

const MiniBar = styled.div`
  position: absolute;
  right: 57px;
  bottom: 3px;
  display: flex;
  justify-content: space-around;
  width: 59px;
  height: 10px;
  background: rgba(240, 240, 240, 0.45);

  & svg {
    filter: brightness(0.85);
  }
`;

const RightPane = styled.div`
  display: flex;
  flex-direction: column;
  flex: 354 1 0;
  min-width: 0;
`;

const SectionView = styled.div`
  position: relative;
  flex: 1;
  border-left: 2px solid #3a4049;
  background: #212830;
`;

const Sheet = styled.article`
  padding: 17px 33px 6px 17px;
  background: #fff;
  color: #333;
  font-family: 'Liberation Sans', Arial, sans-serif;
  font-size: 7px;

  & > h2 {
    margin: 0 0 8px;
    color: #111;
    font-size: 9px;
    font-weight: 700;
    line-height: 12px;
  }
`;

const DataTable = styled.table`
  width: 100%;
  table-layout: fixed;
  border-collapse: collapse;

  & tr {
    height: ${({ $compact }) => ($compact ? 10 : 13)}px;
  }

  & tbody tr {
    height: 13px;
  }
`;

const cell = css`
  padding: 0 1px;
  border: 1px solid #777;
  border-left-style: ${({ $open }) => ($open === 'left' ? 'none' : 'solid')};
  border-right-style: ${({ $open }) => ($open === 'right' ? 'none' : 'solid')};
  line-height: 8px;
`;

const Head = styled.th`
  ${cell}
  background: #dedede;
  color: #222;
  text-align: ${({ $center }) => ($center ? 'center' : 'left')};
`;

const Cell = styled.td`
  ${cell}
  text-align: ${({ $num }) => ($num ? 'right' : 'left')};
`;

const TextCursor = styled.div`
  width: 1px;
  height: 9px;
  margin: 8px 0 17px;
  background: #777;
`;

const StatusBar = styled.footer`
  display: flex;
  align-items: center;
  height: 17px;
  padding-left: 8px;
  border-top: 1px solid #3c4656;
`;

const LayoutTab = styled.button`
  padding: 0 6px;
  height: 100%;

  ${({ $active }) =>
    $active &&
    css`
      margin-left: 4px;
      padding: 0 8px;
      background: #3c4656;
      clip-path: polygon(4px 0, 100% 0, calc(100% - 4px) 100%, 0 100%);
      font-weight: 700;
    `}
`;

const StatusTools = styled.div`
  display: flex;
  align-items: center;
  height: 15px;
  margin-left: auto;
  background: #2f3744;
`;

const Coords = styled.span`
  padding: 0 5px 0 9px;
`;

const StatusText = styled.button`
  padding: 0 2px 0 0;
`;

const StatusItem = styled.span`
  display: flex;
  align-items: center;
`;

const StatusButton = styled.button`
  display: flex;
  align-items: center;
  justify-content: center;
  width: ${({ $width }) => $width}px;
  height: 11px;
  background: ${({ $active }) => ($active ? '#4c80bb' : 'none')};
`;

const CaretCell = styled.span`
  display: flex;
  justify-content: center;
  width: 9px;
`;
